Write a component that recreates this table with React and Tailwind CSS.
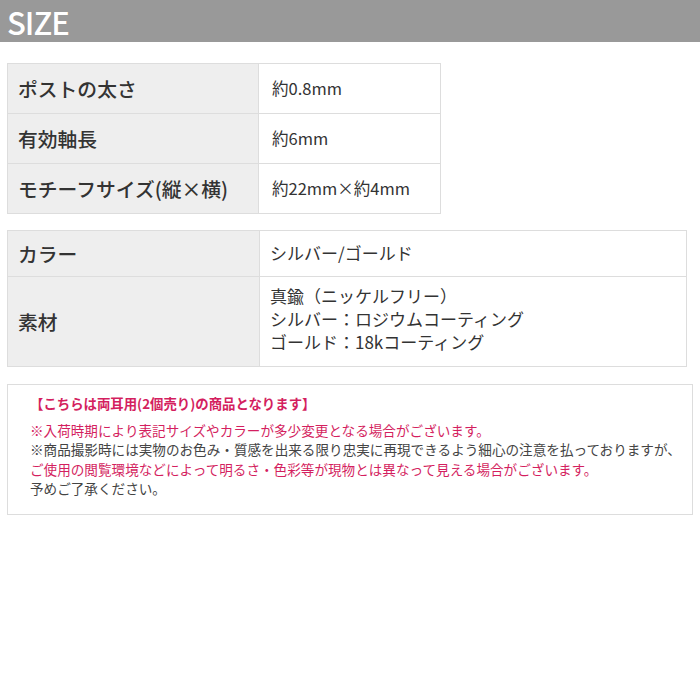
export default function App() {
  const sizeRows = [
    ["ポストの太さ", "約0.8mm"],
    ["有効軸長", "約6mm"],
    ["モチーフサイズ(縦×横)", "約22mm×約4mm"],
  ];

  return (
    <div
      className="w-[700px] h-[700px] bg-white text-[#333]"
      style={{ fontFamily: '"Noto Sans CJK JP", "Noto Sans", sans-serif' }}
    >
      {/* Header */}
      <div className="h-[42px] bg-[#999999] flex items-center px-[7px]">
        <h1 className="text-white text-[31px] font-medium leading-none tracking-[-1px]">SIZE</h1>
      </div>

      {/* Size table */}
      <table className="mt-[21px] ml-[7px] w-[434px] border-collapse">
        <tbody>
          {sizeRows.map(([label, value]) => (
            <tr key={label} className="h-[50px]">
              <th className="w-[251px] bg-[#eeeeee] border border-[#dddddd] text-left font-medium text-[19.8px] pl-[10px]">
                {label}
              </th>
              <td className="border border-[#dddddd] text-[16.5px] pl-[13px]">{value}</td>
            </tr>
          ))}
        </tbody>
      </table>

      {/* Color / material table */}
      <table className="mt-[16px] ml-[7px] w-[680px] border-collapse">
        <tbody>
          <tr className="h-[46px]">
            <th className="w-[252px] bg-[#eeeeee] border border-[#dddddd] text-left font-medium text-[19.8px] pl-[10px]">
              カラー
            </th>
            <td className="border border-[#dddddd] text-[17px] pl-[10px] pb-[2px]">シルバー/ゴールド</td>
          </tr>
          <tr className="h-[90px]">
            <th className="bg-[#eeeeee] border border-[#dddddd] text-left font-medium text-[19.8px] pl-[10px]">
              素材
            </th>
            <td className="border border-[#dddddd] text-[17px] pl-[10px] pb-[6px] leading-[23px]">
              <p>真鍮（ニッケルフリー）</p>
              <p>シルバー：ロジウムコーティング</p>
              <p>ゴールド：18kコーティング</p>
            </td>
          </tr>
        </tbody>
      </table>

      {/* Notes */}
      <div className="mt-[17px] mx-[7px] h-[131px] border border-[#dddddd] pl-[22px] pt-[9px] text-[13.6px] leading-[19.5px]">
        <p className="text-[#d41f5f] font-bold text-[13.4px] mb-[7px]">【こちらは両耳用(2個売り)の商品となります】</p>
        <p className="text-[#d41f5f]">※入荷時期により表記サイズやカラーが多少変更となる場合がございます。</p>
        <p className="text-[#444]">※商品撮影時には実物のお色み・質感を出来る限り忠実に再現できるよう細心の注意を払っておりますが、</p>
        <p className="text-[#d41f5f]">ご使用の閲覧環境などによって明るさ・色彩等が現物とは異なって見える場合がございます。</p>
        <p className="text-[#444]">予めご了承ください。</p>
      </div>
    </div>
  );
}
